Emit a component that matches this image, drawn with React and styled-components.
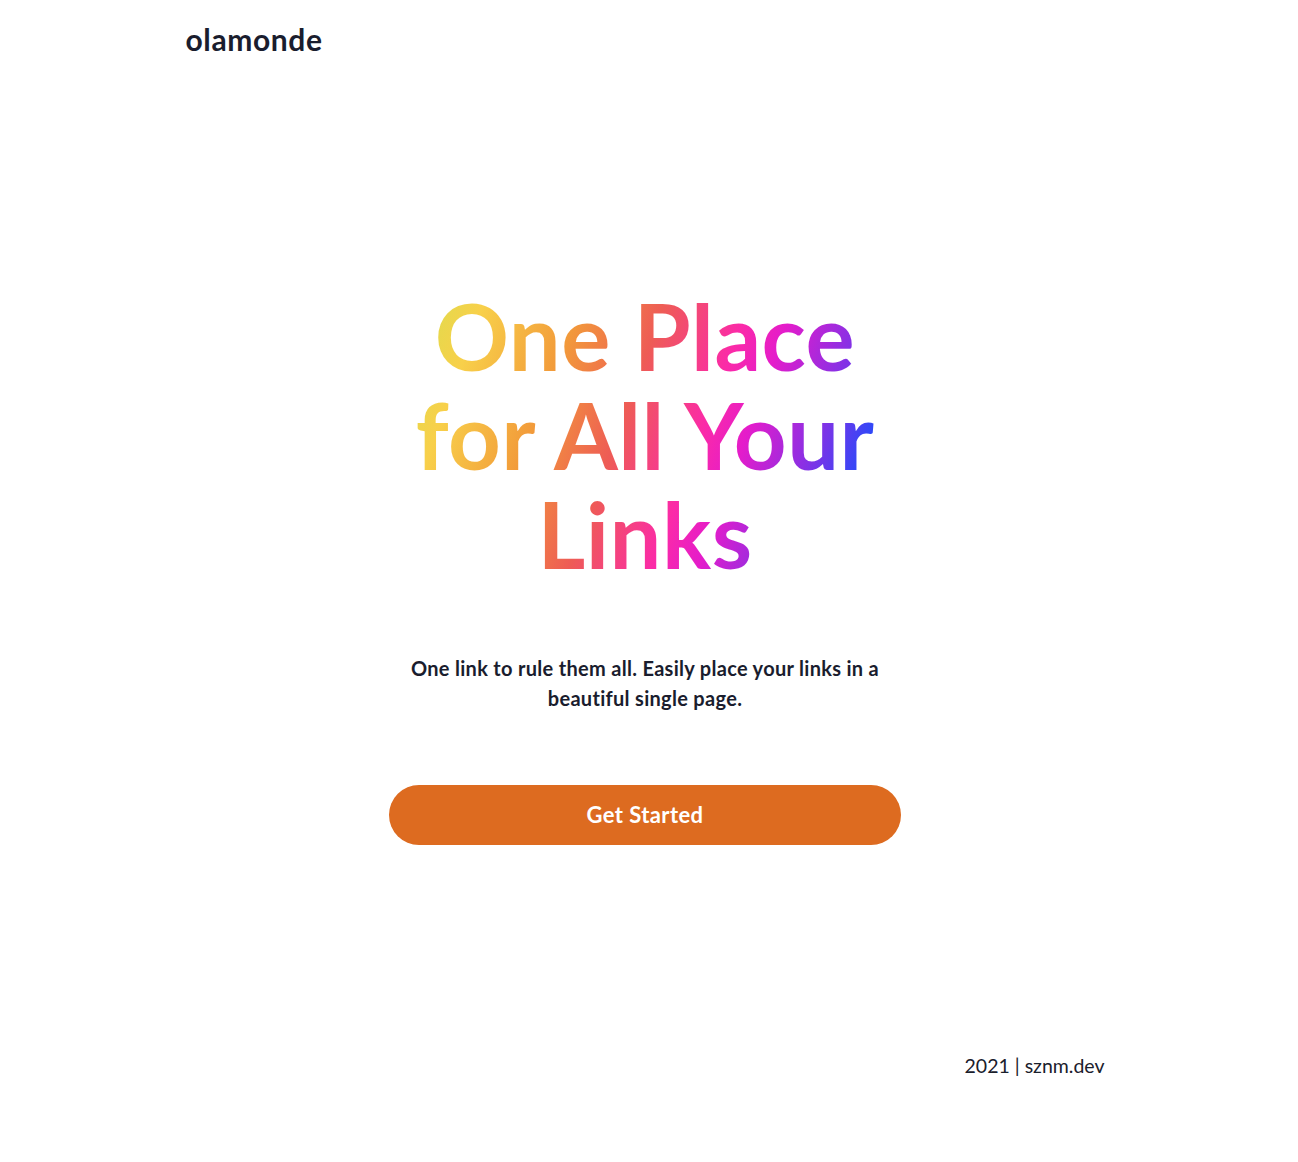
import React from "react";
import styled, { createGlobalStyle } from "styled-components";

const GlobalStyle = createGlobalStyle`
  body {
    margin: 0;
    background: #ffffff;
    font-family: "Lato", "Noto Sans", sans-serif;
    color: #1a202c;
  }
`;

const Page = styled.div`
  width: 927px;
  min-height: 1162px;
  margin: 0 auto;
  padding-right: 8px;
  display: flex;
  flex-direction: column;
  box-sizing: border-box;
`;

const Header = styled.header`
  height: 80px;
  display: flex;
  align-items: center;
`;

const Logo = styled.div`
  font-size: 30px;
  font-weight: 700;
  letter-spacing: 0.6px;
  color: #1a1d2e;
  margin-top: -2px;
`;

const Main = styled.main`
  flex: 1;
  display: flex;
  flex-direction: column;
  align-items: center;
  padding-top: 206px;
`;

const Heading = styled.h1`
  margin: 0;
  font-size: 92px;
  font-weight: 700;
  line-height: 99px;
  letter-spacing: 0.5px;
  text-align: center;
  background: linear-gradient(
    110deg,
    #d8df4e 0%,
    #f8d04a 13%,
    #f29a3a 30%,
    #ee5c55 45%,
    #fb2aa8 60%,
    #e41ccb 68%,
    #8a30e4 80%,
    #2f48f8 90%,
    #1d4cff 100%
  );
  -webkit-background-clip: text;
  background-clip: text;
  color: transparent;
`;

const Tagline = styled.p`
  margin: 70px 0 0;
  font-size: 20px;
  font-weight: 700;
  letter-spacing: 0.3px;
  line-height: 30px;
  text-align: center;
  color: #1a1d2e;
`;

const Button = styled.button`
  margin-top: 72px;
  width: 512px;
  height: 60px;
  padding: 0 0 2px;
  border: none;
  border-radius: 30px;
  background: #dd6b20;
  color: #ffffff;
  font-family: inherit;
  font-size: 22px;
  font-weight: 700;
  letter-spacing: 0.4px;
  cursor: pointer;
`;

const Footer = styled.footer`
  height: 108px;
  display: flex;
  justify-content: flex-end;
  align-items: flex-start;
  font-size: 19.5px;
  color: #1a202c;
`;

export default function App() {
  return (
    <>
      <GlobalStyle />
      <Page>
        <Header>
          <Logo>olamonde</Logo>
        </Header>
        <Main>
          <Heading>
            One Place
            <br />
            for All Your
            <br />
            Links
          </Heading>
          <Tagline>
            One link to rule them all. Easily place your links in a
            <br />
            beautiful single page.
          </Tagline>
          <Button>Get Started</Button>
        </Main>
        <Footer>2021 | sznm.dev</Footer>
      </Page>
    </>
  );
}
